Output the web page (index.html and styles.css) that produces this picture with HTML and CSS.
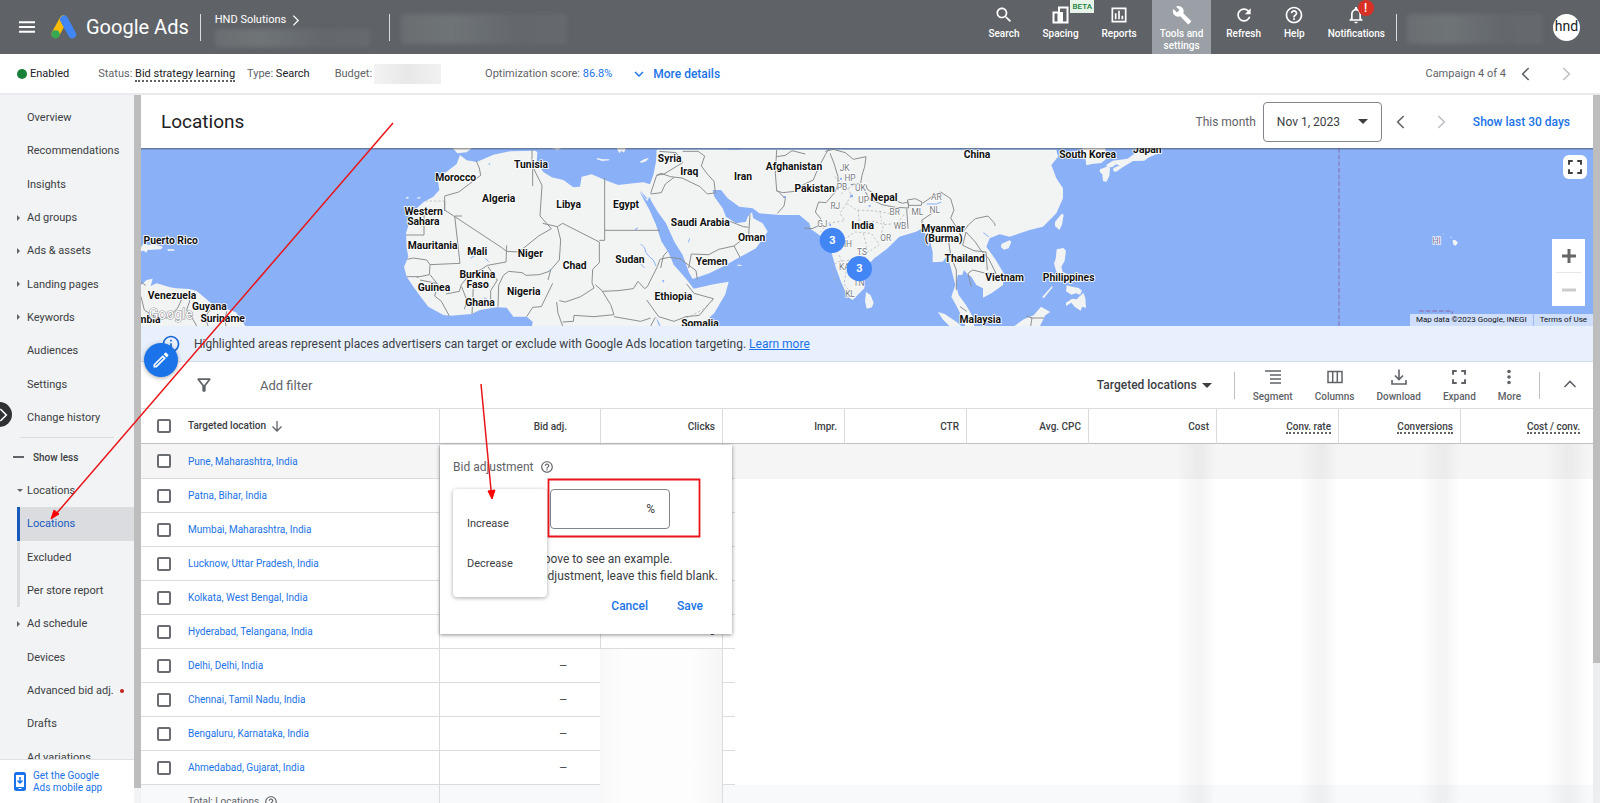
FILE: index.html
```html
<!DOCTYPE html>
<html lang="en">
<head>
  <meta charset="UTF-8">
  <meta name="viewport" content="width=device-width, initial-scale=1">
  <title>Locations - Google Ads</title>
  <link rel="stylesheet" href="styles.css">
</head>
<body>

  <svg class="defs" width="0" height="0" aria-hidden="true">
    <symbol id="i-help" viewBox="0 0 24 24"><path d="M11 18h2v-2h-2v2zm1-16C6.48 2 2 6.48 2 12s4.48 10 10 10 10-4.48 10-10S17.52 2 12 2zm0 18c-4.41 0-8-3.59-8-8s3.59-8 8-8 8 3.59 8 8-3.59 8-8 8zm0-14c-2.21 0-4 1.79-4 4h2c0-1.1.9-2 2-2s2 .9 2 2c0 2-3 1.75-3 5h2c0-2.25 3-2.5 3-5 0-2.21-1.79-4-4-4z"/></symbol>
    <symbol id="i-left" viewBox="0 0 24 24"><path d="M16 3l-9 9 9 9" fill="none" stroke="currentColor" stroke-width="2.4"/></symbol>
    <symbol id="i-right" viewBox="0 0 24 24"><path d="M8 3l9 9-9 9" fill="none" stroke="currentColor" stroke-width="2.4"/></symbol>
    <symbol id="i-full" viewBox="0 0 24 24"><path d="M4 9V4h5M15 4h5v5M20 15v5h-5M9 20H4v-5" fill="none" stroke="currentColor" stroke-width="2.6"/></symbol>
  </svg>

  <header class="topbar">
    <button class="menu" aria-label="Menu"><svg viewBox="0 0 16 12" width="16" height="12"><path d="M0 1.2h16M0 6h16M0 10.8h16" stroke="currentColor" stroke-width="2"/></svg></button>
    <a class="brand" href="#">
      <svg viewBox="0 0 26 24" width="26" height="24">
        <path d="M12.5 4.5L4.5 19" stroke="#fbbc04" stroke-width="8" stroke-linecap="round"/>
        <path d="M13 4.5L21.2 19.4" stroke="#4285f4" stroke-width="8" stroke-linecap="round"/>
        <circle cx="4.6" cy="19.3" r="4.1" fill="#34a853"/>
      </svg>
      <span>Google Ads</span>
    </a>
    <div class="account">
      <a href="#">HND Solutions <svg width="13" height="13"><use href="#i-right"/></svg></a>
      <div class="smudge"></div>
    </div>
    <div class="campaign"><div class="smudge"></div></div>

    <nav class="tools">
      <button><svg viewBox="0 0 24 24" width="20" height="20"><path d="M15.5 14h-.79l-.28-.27C15.41 12.59 16 11.11 16 9.5 16 5.91 13.09 3 9.5 3S3 5.91 3 9.5 5.91 16 9.5 16c1.61 0 3.09-.59 4.23-1.57l.27.28v.79l5 4.99L20.49 19l-4.99-5zm-6 0C7.01 14 5 11.99 5 9.5S7.01 5 9.5 5 14 7.01 14 9.5 11.99 14 9.5 14z"/></svg>Search</button>
      <button><svg viewBox="0 0 20 20" width="20" height="20"><path d="M2.5 7.5h5v10h-5zM8 2.5h8.5v15H8z" fill="none" stroke="currentColor" stroke-width="2"/><path d="M8 7h4v10H8z"/></svg>Spacing<span class="beta">BETA</span></button>
      <button><svg viewBox="0 0 24 24" width="20" height="20"><path d="M4 4h16v16H4z" fill="none" stroke="currentColor" stroke-width="2"/><path d="M7 10h2v7H7zM11 7h2v10h-2zM15 13h2v4h-2z"/></svg>Reports</button>
      <button class="current"><svg viewBox="0 0 24 24" width="20" height="20"><path d="M22.7 19l-9.1-9.1c.9-2.3.4-5-1.5-6.9-2-2-5-2.4-7.4-1.3L9 6 6 9 1.6 4.7C.4 7.1.9 10.1 2.9 12.1c1.9 1.9 4.6 2.4 6.9 1.5l9.1 9.1c.4.4 1 .4 1.4 0l2.3-2.3c.5-.4.5-1.1.1-1.4z"/></svg>Tools and<br>settings</button>
      <button><svg viewBox="0 0 24 24" width="20" height="20"><path d="M17.65 6.35C16.2 4.9 14.21 4 12 4c-4.42 0-7.99 3.58-7.99 8s3.57 8 7.99 8c3.73 0 6.84-2.55 7.73-6h-2.08c-.82 2.33-3.04 4-5.65 4-3.31 0-6-2.69-6-6s2.69-6 6-6c1.66 0 3.14.69 4.22 1.78L13 11h7V4l-2.35 2.35z"/></svg>Refresh</button>
      <button><svg width="20" height="20"><use href="#i-help"/></svg>Help</button>
      <button><svg viewBox="0 0 24 24" width="20" height="20"><path d="M12 22c1.1 0 2-.9 2-2h-4c0 1.1.9 2 2 2zm6-6v-5c0-3.07-1.63-5.64-4.5-6.32V4c0-.83-.67-1.5-1.5-1.5s-1.5.67-1.5 1.5v.68C7.64 5.36 6 7.92 6 11v5l-2 2v1h16v-1l-2-2zm-2 1H8v-6c0-2.48 1.51-4.5 4-4.5s4 2.02 4 4.5v6z"/></svg>Notifications<span class="alert">!</span></button>
    </nav>
    <div class="user"><div class="smudge"></div></div>
    <div class="avatar">hnd</div>
  </header>

  <section class="status">
    <span class="enabled"><i></i>Enabled</span>
    <span class="st-status">Status: <a href="#" class="dotted">Bid strategy learning</a></span>
    <span class="st-type">Type: <b>Search</b></span>
    <span class="st-budget">Budget:<i></i></span>
    <span class="st-score">Optimization score: <a href="#">86.8%</a></span>
    <a class="details" href="#"><svg viewBox="0 0 10 6" width="10" height="6"><path d="M1 1l4 4 4-4" fill="none" stroke="currentColor" stroke-width="1.4"/></svg>More details</a>
    <span class="pos">Campaign 4 of 4</span>
    <button aria-label="Previous campaign"><svg width="16" height="16"><use href="#i-left"/></svg></button>
    <button aria-label="Next campaign" disabled><svg width="16" height="16"><use href="#i-right"/></svg></button>
  </section>

  <div class="page">
    <aside class="sidebar">
      <nav>
        <ul class="group first">
          <li><a href="#">Overview</a></li>
          <li><a href="#">Recommendations</a></li>
          <li><a href="#">Insights</a></li>
          <li><a href="#" class="more">Ad groups</a></li>
          <li><a href="#" class="more">Ads &amp; assets</a></li>
          <li><a href="#" class="more">Landing pages</a></li>
          <li><a href="#" class="more">Keywords</a></li>
          <li><a href="#">Audiences</a></li>
          <li><a href="#">Settings</a></li>
          <li><a href="#">Change history</a></li>
        </ul>
        <button class="less"><i></i>Show less</button>
        <ul class="group second">
          <li><a href="#" class="more open">Locations</a></li>
          <li class="sub active"><a href="#">Locations</a></li>
          <li class="sub"><a href="#">Excluded</a></li>
          <li class="sub"><a href="#">Per store report</a></li>
          <li><a href="#" class="more">Ad schedule</a></li>
          <li><a href="#">Devices</a></li>
          <li><a href="#">Advanced bid adj.<i class="new"></i></a></li>
          <li><a href="#">Drafts</a></li>
          <li><a href="#">Ad variations</a></li>
        </ul>
      </nav>
      <a class="app" href="#">
        <svg viewBox="0 0 12 19" width="12" height="19"><rect x="1" y="1" width="10" height="17" rx="1.5" fill="none" stroke="currentColor" stroke-width="2"/><path d="M1 1h10v2H1zM1 15h10v3H1z"/><path d="M6 5v6M3.5 8.5L6 11l2.5-2.5" fill="none" stroke="currentColor" stroke-width="1.5"/><path d="M4.5 16.5h3" stroke="#fff"/></svg>
        <span>Get the Google<br>Ads mobile app</span>
      </a>
      <button class="reveal" aria-label="Show all campaigns"><svg width="16" height="16"><use href="#i-right"/></svg></button>
    </aside>
    <div class="track left"></div>

    <main>
      <div class="title">
        <h1>Locations</h1>
        <span class="range">This month</span>
        <button class="date">Nov 1, 2023<i class="caret"></i></button>
        <button class="step" aria-label="Previous period"><svg width="16" height="16"><use href="#i-left"/></svg></button>
        <button class="step" aria-label="Next period" disabled><svg width="16" height="16"><use href="#i-right"/></svg></button>
        <a href="#">Show last 30 days</a>
      </div>

      <div class="map">
        <svg class="world" viewBox="-777 24 4356 534" preserveAspectRatio="xMidYMid slice">
          <!-- land -->
          <g fill="#f2f3f3">
            <path d="M180 45l-10 27-30 23-28 15 6 40-18 20-28 15-22 20-20 35-12 40 2 45 5 25-13 30 8 30 20 30 22 30 23 30 45 25 22 2 63-5 25-12 50-8 30 1 20 27h40l18 15-3 20h500l48-46 33-56 10-38-45 8-60 13-17-22-13-16-30-34-15-36-22-34-16-50-20-45-14-25-16-30 24 30 6-14 7 15 18 30 25 35 25 55 25 40 20 55 10 17 50-17 50-25 35-20 55-30 35-50-15-25-28-15-4-18-13 13-5 15-30 5-15-10-15-10-10-25-25-35-5-20 25 0 20 25 35 25 40 5 20 15 60 5h60l30 25 5 18 25 17 30 20 10 45 10 35 15 40 20 45 15 10 20-20 15-15-2-30 7-35 25-25 40-30 35-35 50-15 15-8 25 28 10 40v32l30-2 15-20 10 40 13 50-12 35 14 25 15 30 15 38h25l-5-33-20-35-22-30-8-30 5-30 14 0 5-15 10 12 12 8 15 25 20 10v28l25-13 35-25 2-35-27-45-25-35 10-25 30-12 30 7 60-20 40-10 40-40 20-45v-30l-20-30-15-40 20-25-5-21H770l-2 36-8 40-10 28-20-6-30 3-45 5-40-15-40-17-30 7-5 30-20 2-30-22-35-8-25-16-20-30 2-30-7-4-75 2-50 10-50 22-30-5z"/>
            <path d="M158 24l14 16 28-3 16-13zM455 24l18 6 12-6zM590 54l18 4 20 0 0 3-22 2-15-5zM718 66l16-9 13-4-9 11-13 4zM650 24l8 16 6-8 8 6 6-14z"/>
            <path d="M1010 374l12 0 5 3-12 1zM18 172l7-2 1 5-7 1zM48 174l14-4-3 6z"/>
            <!-- east asia -->
            <path d="M2048 24l7 22 4 30 17-4 28-3 14-12-2-33zM2100 88l20-8 10 4-2 24-9 18-10-3-2-20-8-8zM2118 76l20-14 45-6 20-15 10-17h70l-6 16-30 12-14 10-34 1-30 18-20-8-12 8-13 2zM2140 84l20-8 9 5-20 14-9-1zM1965 246l20-25 6 3-5 30-8 16-13-12zM1804 312l24-11 6 4-8 20-14 4-9-7z"/>
            <path d="M1970 328l20-4 8 8-4 30-10 18 4 16 26 12 10 18-12-4-10 6-12-20-10 2-12-18-6-22 5-12zM2000 436l16 4 20 4 10 8-6 12-12-4-14 4-16-10zM1998 488l18-12 14 2 20-20 6 16 2 30-12-4-4 12-18-12-10-12-16 10zM1926 472l30-34 2 4-26 32zM1843 558l28-20 30-12 22-26 28 16-15 10-16 32zM1614 516l20 6 36 24 14 12h-36l-20-20zM1398 456l14 10 9 22-5 14-16 4-5-22z"/>
            <!-- caribbean and south america -->
            <path d="M-777 322l12-18 8 12 16-4 30 8-6 8-40 2-4 8-8-6-8 2zM-698 328l20 0 2 4-20 1zM-777 435l17-15 18-4-6 22 18-8 40 12 18 3 40 2 22 6 10 8 40 34 34 10 34 12 28 41h-313z"/>
            <path d="M3158 300l8 0 8 8-8 10-7-6zM3150 290l6 1-2 3zM3128 281l4 1-2 2z"/>
          </g>
          <!-- seas and lakes -->
          <g fill="#8ab1f8">
            <path d="M975 24h52l-8 6h-36zM1678 24l8 8-8-4zM705 268l9-8-2 6-7 6zM864 306l4-12 2 2-4 12zM263 74l8-6-2 6zM787 420l6 0-2 8-4-4zM768 532l8 14 6 12-6-2zM250 472l10 4 8 8-12-4z"/>
            <path d="M1150 168h8v6h-8zM1320 114h6v5h-6zM1350 164h9v8h-9zM1406 195h6v5h-6zM1288 252h5v6h-5zM720 150l24 28-8-3zM446 390l8-2-4 8z"/>
          </g>
          <path d="M722 312l12 12 4 14 10 12 12 10 8 18M720 370l14 14M212 355l12-8M256 355l10 10M1580 192l30 0 14-6M1750 278l16 12" fill="none" stroke="#8ab1f8" stroke-width="3"/>
          <!-- borders -->
          <g fill="none" stroke="#8c8f92" stroke-width="3">
            <path d="M228 62l10 22 4 22-26 20-40 30-42 12v42l170 112 16 12 36 2 60-48 38-22-34-38 6-92-30-60V30M414 72l-16 16v50M134 183v30M72 225v60H18M164 228h22M164 228l16 142-90 4-10-14-40-6-18 4M320 316l-2 50-56 10-18 12-36 16-24 30-6 20-40 8M428 250l44 10 16-10 110 56v62l-20 20-2 40 6 16-40 26-46 16-18-4M472 260l10 40-4 60-26 30-8 30M614 114v187h-16M614 271h166M310 406l16-12 40 4 12 8 40-2 30-10M310 406l-14 30-2 64M264 380l16 24 12 16-20 32v50M216 522l4-82 48 0M185 440l16 42-8 26M90 374l-2 30-38 8M20 410h36M90 404l24 30-10 34 20 16 24 44M60 420l50 10M458 430l-34 70-26 2-18 28M470 486l4 34 14 38M488 546l32-2 2-18 60 4 60-6-10-30-26-42-20-18M606 454l48-2 46-6 14-22 20 22 8-6 30-60 8-22 26-6 34 4 24 18 24 18 4 26M740 480l36 50 46 14 36-14 40-4 42-50-58-16-22-28M766 532l-14 26M642 530l80 14 30-10M782 384l8-36 12-14"/>
            <path d="M778 34l50 4 20 30-56 34-22 4-18 54M770 106l12-6 30 10 34 4 54 26 22 22 26-4M822 112l-26 20-12 26-32 4M848 34l46 0 20 14-10 30 18 24 20 22 4 32M866 384l8-42 52 2 30-16 46-10 18 34M1002 318l44-34 4-60M990 244l40 16 16 2M1130 30l-4 70 4 50 26 26-4 22-20 22M1128 152l20 6 36-4 26-20 30-14 12-30 24-46 12-20M1130 50l26-4 20-14 40 10M1276 34l24-6 36 10 24 20 38-8-4 30-8 26-4 24-30 4M1290 40l12 30 12 40 0 24-10 24-26 30-22-2-10 30 16 20-8 22-18 8-24-2M1398 134l4 14 30 20 48 12 28 10 16-4 2 18-40-2-40-8-38-18-16-28M1522 180l24-4 20 10-2 10-38 0zM1568 190l28-20 26-14 30 20 10 34-10 24 20 32 20 6 14-18 20-18 38-8 18 20 4 10M1596 220l-30 20 0 14M1520 206l4 60M1645 300l8 50 16 40 0 60M1698 276l28 30 16 24 24 26 22 44-30 0-40-10-14 10 10 40M1698 276l-10 40 34 16 36 4 4 54M1680 500l20 14M1892 534h40M1880 528l16 6-4 24M-777 470l10 40 30 20 40 4 30-30 14-30M-630 480l-10 30 20 30 10 18M-570 510l-14 20 8 28M-520 514l-6 24 4 20M-777 426l14 10"/>
          </g>
          <g fill="none" stroke="#a8abae" stroke-width="2" stroke-dasharray="7 6">
            <path d="M76 183h58M860 534l46-24 34-30M1304 110l30 24 20 30-14 26 30 20 70 4 30 8M1340 190l-20 30 14 22-52 8-20 26 14 10 60 10 28-20 50 4 24 34-30 20-26 10-30 16-40 6-16 14 10 40 24 24M1390 280l10 40-16 22 16 14M1374 210l4 40 40-6 34 10 40-4 20-26M1360 134l-40 30M1318 346l20 50-6 36 22 30M1440 214l4 30M1452 246l-10 44"/>
          </g>
          <path d="M2817 24v534M3057 513h100v20" fill="none" stroke="#8a7fc0" stroke-width="4" stroke-dasharray="14 6"/>

          <g class="country">
            <text x="167" y="123">Morocco</text><text x="393" y="85">Tunisia</text><text x="296" y="186">Algeria</text>
            <text x="506" y="203">Libya</text><text x="678" y="203">Egypt</text><text x="71" y="225">Western</text><text x="70" y="255">Sahara</text>
            <text x="98" y="328">Mauritania</text><text x="232" y="345">Mali</text><text x="391" y="350">Niger</text><text x="524" y="388">Chad</text>
            <text x="690" y="368">Sudan</text><text x="232" y="413">Burkina</text><text x="233" y="443">Faso</text><text x="102" y="452">Guinea</text>
            <text x="371" y="465">Nigeria</text><text x="240" y="498">Ghana</text><text x="820" y="481">Ethiopia</text><text x="900" y="562">Somalia</text>
            <text x="809" y="66">Syria</text><text x="868" y="106">Iraq</text><text x="1029" y="120">Iran</text><text x="901" y="258">Saudi Arabia</text>
            <text x="1055" y="303">Oman</text><text x="935" y="376">Yemen</text><text x="1182" y="91">Afghanistan</text><text x="1244" y="156">Pakistan</text>
            <text x="1452" y="183">Nepal</text><text x="1388" y="268">India</text><text x="1731" y="53">China</text><text x="2063" y="53">South Korea</text>
            <text x="2242" y="39">Japan</text><text x="1629" y="276">Myanmar</text><text x="1631" y="306">(Burma)</text><text x="1694" y="366">Thailand</text>
            <text x="1814" y="423">Vietnam</text><text x="2006" y="423">Philippines</text><text x="1741" y="548">Malaysia</text>
            <text x="-688" y="313">Puerto Rico</text><text x="-684" y="478">Venezuela</text><text x="-572" y="511">Guyana</text><text x="-532" y="546">Suriname</text>
            <text x="-766" y="548">lombia</text>
          </g>
          <g class="state">
            <text x="1334" y="92">JK</text><text x="1350" y="122">HP</text><text x="1326" y="149">PB</text><text x="1381" y="154">UK</text>
            <text x="1391" y="189">UP</text><text x="1306" y="207">RJ</text><text x="1484" y="225">BR</text><text x="1552" y="225">ML</text>
            <text x="1604" y="220">NL</text><text x="1609" y="180">AR</text><text x="1267" y="262">GJ</text><text x="1500" y="266">WB</text>
            <text x="1457" y="304">OR</text><text x="1336" y="320">MH</text><text x="1386" y="345">TS</text><text x="1333" y="390">KA</text>
            <text x="1377" y="438">TN</text><text x="1350" y="470">KL</text><text x="3110" y="312" class="us">HI</text>
          </g>
          <text class="mark" x="-754" y="538">Google</text>
          <g class="pin">
            <circle cx="1297" cy="301" r="38"/><text x="1297" y="312">3</text>
            <circle cx="1378" cy="386" r="38"/><text x="1378" y="397">3</text>
          </g>
        </svg>
        <button class="expand-map" aria-label="Full screen"><svg width="18" height="18"><use href="#i-full"/></svg></button>
        <div class="zoom">
          <button aria-label="Zoom in"><svg viewBox="0 0 16 16" width="16" height="16"><path d="M8 1v14M1 8h14" stroke="#666" stroke-width="3"/></svg></button>
          <button aria-label="Zoom out" disabled><svg viewBox="0 0 16 16" width="16" height="16"><path d="M1 8h14" stroke="#ccc" stroke-width="3"/></svg></button>
        </div>
        <div class="credits"><span>Map data ©2023 Google, INEGI</span><a href="#">Terms of Use</a></div>
      </div>

      <div class="notice">
        <svg class="info" viewBox="0 0 24 24" width="20" height="20"><path d="M11 7h2v2h-2zm0 4h2v6h-2zm1-9C6.48 2 2 6.48 2 12s4.48 10 10 10 10-4.48 10-10S17.52 2 12 2zm0 18c-4.41 0-8-3.59-8-8s3.59-8 8-8 8 3.59 8 8-3.59 8-8 8z"/></svg>
        <p>Highlighted areas represent places advertisers can target or exclude with Google Ads location targeting. <a href="#">Learn more</a></p>
        <button class="fab" aria-label="Edit locations"><svg viewBox="0 0 24 24" width="20" height="20"><path d="M14.06 9.02l.92.92L5.92 19H5v-.92l9.06-9.06M17.66 3c-.25 0-.51.1-.7.29l-1.83 1.83 3.75 3.75 1.83-1.83c.39-.39.39-1.02 0-1.41l-2.34-2.34c-.2-.2-.45-.29-.71-.29zm-3.6 3.19L3 17.25V21h3.75L17.81 9.94l-3.75-3.75z"/></svg></button>
      </div>

      <div class="toolbar">
        <button class="filter" aria-label="Filter"><svg viewBox="0 0 24 24" width="20" height="20"><path d="M7 6h10l-5.01 6.3L7 6zm-2.75-.39C6.27 8.2 10 13 10 13v6c0 .55.45 1 1 1h2c.55 0 1-.45 1-1v-6s3.72-4.8 5.74-7.39A1 1 0 0 0 18.95 4H5.04a1 1 0 0 0-.79 1.61z"/></svg></button>
        <input type="text" placeholder="Add filter" aria-label="Add filter">
        <button class="view">Targeted locations<i class="caret"></i></button>
        <div class="actions">
          <button><svg viewBox="0 0 20 20" width="20" height="20"><path d="M2 4h16M7 8h11M7 12h11M7 16h11" stroke="currentColor" stroke-width="1.6"/></svg>Segment</button>
          <button><svg viewBox="0 0 20 20" width="20" height="20"><path d="M3 4.5h14v11H3zM7.700 4.500v11M12.300 4.500v11" fill="none" stroke="currentColor" stroke-width="1.5"/></svg>Columns</button>
          <button><svg viewBox="0 0 20 20" width="20" height="20"><path d="M10 2.500v9.500M6 8.500l4 4 4-4M3 13v4h14v-4" fill="none" stroke="currentColor" stroke-width="1.6"/></svg>Download</button>
          <button><svg width="18" height="20"><use href="#i-full"/></svg>Expand</button>
          <button><svg viewBox="0 0 20 20" width="20" height="20"><circle cx="10" cy="4.5" r="1.8"/><circle cx="10" cy="10" r="1.8"/><circle cx="10" cy="15.5" r="1.8"/></svg>More</button>
        </div>
        <button class="collapse" aria-label="Collapse"><svg viewBox="0 0 14 10" width="14" height="10"><path d="M1.5 8L7 2.5 12.5 8" fill="none" stroke="currentColor" stroke-width="1.6"/></svg></button>
      </div>

      <table>
        <colgroup>
          <col class="c-check"><col class="c-name"><col class="c-bid"><col class="c-num"><col class="c-num"><col class="c-num"><col class="c-num"><col class="c-cost"><col class="c-num"><col class="c-num"><col class="c-last">
        </colgroup>
        <thead>
          <tr>
            <th><input type="checkbox" aria-label="Select all"></th>
            <th class="name">Targeted location <svg viewBox="0 0 12 14" width="12" height="14"><path d="M6 2v10M1.5 7.5L6 12l4.5-4.5" fill="none" stroke="#5f6368" stroke-width="1.3"/></svg></th>
            <th class="bid">Bid adj.</th><th>Clicks</th><th>Impr.</th><th>CTR</th><th>Avg. CPC</th><th>Cost</th>
            <th><span class="dotted">Conv. rate</span></th><th><span class="dotted">Conversions</span></th><th class="last"><span class="dotted">Cost / conv.</span></th>
          </tr>
        </thead>
        <tbody>
          <tr class="hovered">
            <td><input type="checkbox" aria-label="Pune"></td><td class="name"><a href="#">Pune, Maharashtra, India</a></td>
            <td class="bid editing">
              <form class="popup">
                <label for="bid">Bid adjustment <svg width="14" height="14"><use href="#i-help"/></svg></label>
                <div class="field"><input id="bid" type="text"><span>%</span></div>
                <p>Enter a number above to see an example.<br>To remove a bid adjustment, leave this field blank.</p>
                <div class="buttons"><button type="button">Cancel</button><button type="button">Save</button></div>
                <ul class="choices"><li><button type="button">Increase</button></li><li><button type="button">Decrease</button></li></ul>
              </form>
            </td>
            <td></td><td class="cut"></td><td></td><td></td><td class="soft"></td><td class="soft"></td><td class="soft"></td><td class="soft last"></td>
          </tr>
          <tr><td><input type="checkbox" aria-label="Patna"></td><td class="name"><a href="#">Patna, Bihar, India</a></td><td class="bid"></td><td></td><td class="cut"></td><td></td><td></td><td class="soft"></td><td class="soft"></td><td class="soft"></td><td class="soft last"></td></tr>
          <tr><td><input type="checkbox" aria-label="Mumbai"></td><td class="name"><a href="#">Mumbai, Maharashtra, India</a></td><td class="bid"></td><td></td><td class="cut"></td><td></td><td></td><td class="soft"></td><td class="soft"></td><td class="soft"></td><td class="soft last"></td></tr>
          <tr><td><input type="checkbox" aria-label="Lucknow"></td><td class="name"><a href="#">Lucknow, Uttar Pradesh, India</a></td><td class="bid"></td><td></td><td class="cut"></td><td></td><td></td><td class="soft"></td><td class="soft"></td><td class="soft"></td><td class="soft last"></td></tr>
          <tr><td><input type="checkbox" aria-label="Kolkata"></td><td class="name"><a href="#">Kolkata, West Bengal, India</a></td><td class="bid"></td><td></td><td class="cut"></td><td></td><td></td><td class="soft"></td><td class="soft"></td><td class="soft"></td><td class="soft last"></td></tr>
          <tr><td><input type="checkbox" aria-label="Hyderabad"></td><td class="name"><a href="#">Hyderabad, Telangana, India</a></td><td class="bid"></td><td>0</td><td class="cut"></td><td></td><td></td><td class="soft"></td><td class="soft"></td><td class="soft"></td><td class="soft last"></td></tr>
          <tr><td><input type="checkbox" aria-label="Delhi"></td><td class="name"><a href="#">Delhi, Delhi, India</a></td><td class="bid">—</td><td class="hid"></td><td class="cut"></td><td></td><td></td><td class="soft"></td><td class="soft"></td><td class="soft"></td><td class="soft last"></td></tr>
          <tr><td><input type="checkbox" aria-label="Chennai"></td><td class="name"><a href="#">Chennai, Tamil Nadu, India</a></td><td class="bid">—</td><td class="hid"></td><td class="cut"></td><td></td><td></td><td class="soft"></td><td class="soft"></td><td class="soft"></td><td class="soft last"></td></tr>
          <tr><td><input type="checkbox" aria-label="Bengaluru"></td><td class="name"><a href="#">Bengaluru, Karnataka, India</a></td><td class="bid">—</td><td class="hid"></td><td class="cut"></td><td></td><td></td><td class="soft"></td><td class="soft"></td><td class="soft"></td><td class="soft last"></td></tr>
          <tr><td><input type="checkbox" aria-label="Ahmedabad"></td><td class="name"><a href="#">Ahmedabad, Gujarat, India</a></td><td class="bid">—</td><td class="hid"></td><td class="cut"></td><td></td><td></td><td class="soft"></td><td class="soft"></td><td class="soft"></td><td class="soft last"></td></tr>
        </tbody>
        <tfoot>
          <tr><td></td><td class="name">Total: Locations <svg width="14" height="14"><use href="#i-help"/></svg></td><td class="bid"></td><td class="hid"></td><td class="cut"></td><td></td><td></td><td class="soft"></td><td class="soft"></td><td class="soft"></td><td class="soft last"></td></tr>
        </tfoot>
      </table>
    </main>
    <div class="track right"></div>
  </div>

  <!-- walkthrough arrows -->
  <svg class="notes" aria-hidden="true">
    <g fill="none" stroke="#e8161a" stroke-width="1.5">
      <path d="M393 123L56 514M481 384l10 106"/>
      <path d="M548.5 479.5h151v57h-151z" stroke-width="1.8"/>
    </g>
    <path d="M51 519l3-9 5 4zM492 499l-4-8 7-1z" fill="#f00" stroke="#f00"/>
  </svg>

</body>
</html>
```

FILE: styles.css
```css
* {
  box-sizing: border-box;
}
html, body {
  height: 100%;
}
body {
  margin: 0;
  display: flex;
  flex-direction: column;
  overflow: hidden;
  font-family: Roboto, "Liberation Sans", sans-serif;
  font-size: 11px;
  color: #3c4043;
  background: #fff;
}
button {
  font: inherit;
  color: inherit;
  background: none;
  border: 0;
  padding: 0;
}
a {
  color: #1a73e8;
  text-decoration: none;
}
ul {
  list-style: none;
  margin: 0;
  padding: 0;
}
svg {
  fill: currentColor;
  flex: none;
}
.defs {
  position: absolute;
}
.dotted {
  color: #202124;
  border-bottom: 2px dotted #5f6368;
}
.caret {
  border: 5px solid transparent;
  border-top-color: #3c4043;
  border-bottom: 0;
}

/* top bar */
.topbar {
  flex: none;
  height: 54px;
  display: flex;
  align-items: center;
  padding: 0 20px 0 19px;
  background: #5f6368;
  color: #fff;
}
.menu {
  height: 12px;
  display: flex;
}
.brand {
  display: flex;
  align-items: center;
  gap: 9px;
  margin: 0 11px 0 16px;
  color: #fff;
  font-size: 20px;
}
.account, .campaign, .user {
  height: 27px;
  border-left: 1px solid #dadce0;
}
.account {
  width: 189px;
  padding-left: 14px;
}
.account a {
  display: flex;
  align-items: center;
  gap: 3px;
  color: #fff;
  line-height: 12px;
}
.smudge {
  background: linear-gradient(90deg, #6a6e72, #6f7477 30%, #64686d 70%, #666a6f);
  border-radius: 3px;
  filter: blur(2px);
}
.account .smudge {
  width: 155px;
  height: 18px;
  margin-top: 2px;
}
.campaign {
  padding-left: 11px;
}
.campaign .smudge {
  width: 166px;
  height: 30px;
}
.tools {
  margin-left: auto;
  display: flex;
  gap: 7px;
  align-self: stretch;
}
.tools button {
  position: relative;
  display: flex;
  flex-direction: column;
  align-items: center;
  justify-content: flex-start;
  gap: 3px;
  padding: 5px 8px 0;
  font-size: 10px;
  font-weight: 500;
  line-height: 12px;
}
.tools .current {
  background: #9aa0a6;
}
.beta {
  position: absolute;
  top: 0;
  left: 36px;
  padding: 0 2px;
  background: #e6f4ea;
  color: #188038;
  font-size: 8px;
  line-height: 13px;
}
.alert {
  position: absolute;
  top: 0;
  left: 38px;
  width: 16px;
  height: 16px;
  border-radius: 50%;
  background: #d93025;
  font-size: 12px;
  line-height: 16px;
}
.user {
  margin-left: 3px;
  padding-left: 10px;
}
.user .smudge {
  width: 136px;
  height: 30px;
}
.avatar {
  width: 27px;
  height: 27px;
  margin-left: 10px;
  border-radius: 50%;
  background: #fff;
  color: #202124;
  font-size: 14px;
  line-height: 25px;
  text-align: center;
}

/* campaign status line */
.status {
  flex: none;
  height: 41px;
  display: flex;
  align-items: center;
  padding: 0 26px 0 17px;
  border-bottom: 2px solid #e8eaed;
  color: #5f6368;
}
.status b {
  font-weight: 400;
  color: #202124;
}
.enabled {
  display: flex;
  align-items: center;
  gap: 3px;
  color: #202124;
}
.enabled i {
  width: 10px;
  height: 10px;
  border-radius: 50%;
  background: #188038;
}
.st-status {
  margin-left: 29px;
}
.st-type {
  margin-left: 12px;
}
.st-budget {
  display: flex;
  align-items: center;
  gap: 2px;
  margin-left: 25px;
}
.st-budget i {
  width: 67px;
  height: 20px;
  background: linear-gradient(90deg, #f3f3f3, #e8e8e8 50%, #f1f1f1);
}
.st-score {
  margin-left: 44px;
}
.details {
  display: flex;
  align-items: center;
  gap: 9px;
  margin-left: 22px;
  font-size: 12px;
  font-weight: 500;
}
.pos {
  margin-left: auto;
}
.status button {
  display: flex;
  margin-left: 24px;
}
.status button:first-of-type {
  margin-left: 12px;
}
button:disabled {
  color: #bdc1c6;
}

.page {
  flex: 1;
  min-height: 0;
  display: flex;
}

/* sidebar */
.sidebar {
  position: relative;
  flex: none;
  width: 134px;
  display: flex;
  flex-direction: column;
  background: #f1f3f4;
}
.sidebar nav {
  flex: 1;
  min-height: 0;
  overflow: hidden;
}
.group {
  display: grid;
  grid-auto-rows: 1fr;
}
.group.first {
  height: 333px;
  margin: 6px 20px 0 0;
}
.group.second {
  height: 300px;
}
.group a {
  position: relative;
  height: 100%;
  display: flex;
  align-items: center;
  padding-left: 27px;
  color: #3c4043;
  white-space: nowrap;
}
.group .more::before {
  content: "";
  position: absolute;
  left: 17px;
  border: 3px solid transparent;
  border-left-color: #5f6368;
  border-right: 0;
}
.group .open::before {
  border: 3px solid transparent;
  border-top-color: #5f6368;
  border-bottom: 0;
}
.group .sub {
  margin-left: 17px;
  border-left: 3px solid #dadce0;
}
.group .sub a {
  padding-left: 7px;
}
.group .active {
  border-color: #185abc;
  background: #dadce0;
}
.group .active a {
  color: #185abc;
}
.new {
  width: 4px;
  height: 4px;
  margin-left: 6px;
  border-radius: 50%;
  background: #c5221f;
}
.less {
  display: flex;
  align-items: center;
  gap: 9px;
  width: 94px;
  height: 37px;
  margin: 3px 0 0 20px;
  padding-top: 2px;
  border-top: 1px solid #dadce0;
  font-size: 10px;
  font-weight: 500;
}
.less i {
  width: 11px;
  height: 2px;
  margin-left: -7px;
  background: #5f6368;
}
.app {
  flex: none;
  height: 44px;
  display: flex;
  align-items: center;
  gap: 7px;
  padding-left: 14px;
  border-top: 1px solid #e0e0e0;
  background: #fff;
  font-size: 10px;
  line-height: 12px;
}
.reveal {
  position: absolute;
  left: -13px;
  top: 307px;
  width: 25px;
  height: 25px;
  padding-left: 8px;
  border-radius: 50%;
  background: #303134;
  color: #fff;
}
.reveal svg {
  display: block;
}
.track {
  flex: none;
  width: 7px;
  background: #bdbdbd;
}
.track.left {
  border-bottom: 15px solid #f1f3f4;
}
.track.right {
  border-bottom: 140px solid #eceeef;
}

/* main column */
main {
  flex: 1;
  min-width: 0;
  overflow: hidden;
}
.title {
  height: 53px;
  display: flex;
  align-items: center;
  padding: 0 23px 0 20px;
}
h1 {
  margin: 0 auto 0 0;
  font-size: 19px;
  font-weight: 400;
  color: #202124;
}
.range {
  font-size: 12px;
  color: #5f6368;
}
.date {
  width: 119px;
  height: 40px;
  display: flex;
  align-items: center;
  justify-content: space-between;
  margin: 0 11px 0 7px;
  padding: 0 13px;
  border: 1px solid #80868b;
  border-radius: 4px;
  font-size: 12px;
}
.step {
  display: flex;
  margin-right: 24px;
  color: #5f6368;
}
.title a {
  font-size: 12px;
  font-weight: 500;
}
.map {
  position: relative;
  height: 178px;
  background: #8ab1f8;
  overflow: hidden;
}
.map::after {
  content: "";
  position: absolute;
  inset: 0 0 auto;
  height: 2px;
  background: linear-gradient(rgba(60, 64, 67, 0.6), rgba(60, 64, 67, 0.1));
}
.world {
  display: block;
  width: 100%;
  height: 100%;
}
.world text {
  text-anchor: middle;
}
.country {
  font-size: 31px;
  font-weight: 700;
  fill: #111;
  stroke: #fff;
  stroke-width: 5px;
  paint-order: stroke;
}
.state {
  font-size: 25px;
  fill: #75797d;
  stroke: #fff;
  stroke-width: 4px;
  paint-order: stroke;
}
.state .us {
  fill: #7a6a96;
}
.world .mark {
  text-anchor: start;
  font-size: 42px;
  fill: #fff;
  stroke: #8c8f92;
  stroke-width: 3px;
  paint-order: stroke;
}
.pin {
  fill: #4285f4;
}
.pin text {
  font-size: 33px;
  font-weight: 700;
  fill: #fff;
}
.expand-map {
  position: absolute;
  top: 7px;
  right: 6px;
  width: 24px;
  height: 24px;
  padding: 3px;
  border-radius: 6px;
  background: #fff;
}
.expand-map svg {
  display: block;
}
.zoom {
  position: absolute;
  right: 8px;
  bottom: 20px;
  width: 33px;
  padding: 0 4px;
  background: #fff;
}
.zoom button {
  width: 25px;
  height: 33px;
  display: flex;
  align-items: center;
  justify-content: center;
}
.zoom button + button {
  height: 34px;
  border-top: 1px solid #e6e6e6;
}
.credits {
  position: absolute;
  right: 0;
  bottom: 0;
  display: flex;
  background: rgba(230, 238, 253, 0.75);
  font-size: 8px;
  line-height: 12px;
  color: #111;
}
.credits > * {
  padding: 0 6px;
}
.credits a {
  color: #111;
  border-left: 1px solid #9dbcf5;
}
.notice {
  position: relative;
  height: 36px;
  display: flex;
  align-items: center;
  padding-left: 20px;
  background: #e8f0fe;
  border-bottom: 1px solid #d2dbea;
  font-size: 12px;
}
.info {
  color: #1967d2;
}
.notice p {
  margin: 0 0 0 13px;
}
.notice a {
  text-decoration: underline;
}
.fab {
  position: absolute;
  left: 3px;
  top: 17px;
  width: 34px;
  height: 34px;
  padding: 7px;
  border-radius: 50%;
  background: #1a73e8;
  color: #fff;
  box-shadow: 0 1px 4px rgba(0, 0, 0, 0.35);
  z-index: 1;
}
.fab svg {
  display: block;
}
.toolbar {
  height: 47px;
  display: flex;
  align-items: center;
  padding: 0 16px 0 53px;
  border-bottom: 1px solid #dadce0;
  color: #5f6368;
}
.filter {
  display: flex;
}
.toolbar input {
  width: 200px;
  margin: 0 auto 0 46px;
  padding: 0;
  border: 0;
  outline: 0;
  font: 13px Roboto, "Liberation Sans", sans-serif;
}
.toolbar input::placeholder {
  color: #5f6368;
}
.view {
  display: flex;
  align-items: center;
  gap: 5px;
  margin-right: 22px;
  font-size: 12px;
  font-weight: 500;
  color: #3c4043;
}
.actions {
  display: flex;
  gap: 22px;
  padding: 0 19px;
  background: linear-gradient(#bdc1c6, #bdc1c6) left center / 1px 27px no-repeat, linear-gradient(#bdc1c6, #bdc1c6) right center / 1px 27px no-repeat;
}
.actions button {
  font-size: 10px;
  font-weight: 500;
  line-height: 12px;
}
.actions svg {
  display: block;
  margin: 0 auto 4px;
}
.collapse {
  margin-left: 23px;
}

/* table */
table {
  width: 100%;
  table-layout: fixed;
  border-collapse: separate;
  border-spacing: 0;
}
.c-check { width: 47px; }
.c-name { width: 251px; }
.c-bid { width: 161px; }
.c-num { width: 122px; }
.c-cost { width: 128px; }
.c-last { width: 133px; }
th, td {
  height: 34px;
  padding: 0 7px 0 0;
  text-align: right;
  white-space: nowrap;
}
th {
  height: 35px;
  font-size: 10px;
  font-weight: 500;
  border-bottom: 1px solid #bdc1c6;
  border-left: 1px solid #dadce0;
}
td {
  font-size: 10px;
}
th:first-child, td:first-child {
  padding: 0 0 0 16px;
  border-left: 0;
  text-align: left;
}
th.name, td.name {
  padding: 0;
  border-left: 0;
  text-align: left;
}
td.name, td:first-child, td.bid {
  border-bottom: 1px solid #dadce0;
}
td.bid, td.bid + td {
  border-left: 1px solid #dadce0;
}
td.bid + td {
  border-bottom: 1px solid #dadce0;
}
th.bid, td.bid {
  padding-right: 33px;
}
th.last, td.last {
  padding-right: 13px;
}
th svg, tfoot svg {
  margin-left: 2px;
  vertical-align: middle;
}
th .dotted {
  color: inherit;
}
input[type="checkbox"] {
  appearance: none;
  display: block;
  width: 14px;
  height: 14px;
  margin: 0;
  border: 2px solid #6a6e72;
  border-radius: 2px;
  background: #fff;
}
.hovered td {
  height: 35px;
  background-color: #f5f5f5;
}
td.cut {
  border-left: 1px solid #dadce0;
  background-image: linear-gradient(#dadce0, #dadce0);
  background-size: 12px 1px;
  background-position: left bottom;
  background-repeat: no-repeat;
}
td.hid {
  background: linear-gradient(90deg, #f8f8f8, #fdfdfd 20%, #fdfdfd 75%, #f6f6f6);
}
td.bid + td.hid {
  border-left: 0;
  border-bottom: 0;
}
td.soft {
  background-image: linear-gradient(to left, transparent, rgba(0, 0, 0, 0.04) 14px, rgba(0, 0, 0, 0.04) 20px, transparent 40px);
}
td.soft.last {
  background-image: linear-gradient(to left, transparent 4px, rgba(0, 0, 0, 0.04) 22px, rgba(0, 0, 0, 0.04) 28px, transparent 48px);
}
tfoot td {
  background-color: #f8f9fa;
  color: #5f6368;
}

/* bid adjustment popup */
.editing {
  position: relative;
}
.popup {
  position: absolute;
  left: 0;
  top: 1px;
  width: 292px;
  height: 189px;
  padding: 14px 13px;
  background: #fff;
  box-shadow: 0 1px 4px rgba(0, 0, 0, 0.45);
  font-size: 12px;
  text-align: left;
  z-index: 2;
}
.popup label {
  display: flex;
  align-items: center;
  gap: 7px;
  height: 16px;
  color: #5f6368;
}
.field {
  width: 120px;
  height: 40px;
  display: flex;
  align-items: center;
  margin: 14px 0 0 97px;
  padding-right: 14px;
  border: 1px solid #80868b;
  border-radius: 4px;
}
.field input {
  flex: 1;
  min-width: 0;
  border: 0;
  outline: 0;
  background: none;
}
.popup p {
  margin: 22px 0 0;
  line-height: 17px;
}
.buttons {
  display: flex;
  justify-content: flex-end;
  gap: 29px;
  margin: 14px 16px 0 0;
  color: #1a73e8;
  font-weight: 500;
}
.choices {
  position: absolute;
  left: 13px;
  top: 44px;
  width: 94px;
  padding: 14px 0;
  border-radius: 4px;
  background: #fff;
  box-shadow: 0 1px 4px rgba(0, 0, 0, 0.35);
  font-size: 11px;
}
.choices button {
  width: 100%;
  height: 40px;
  padding-left: 14px;
  text-align: left;
}

.notes {
  position: absolute;
  left: 0;
  top: 0;
  width: 100%;
  height: 100%;
  pointer-events: none;
  z-index: 3;
}
```
